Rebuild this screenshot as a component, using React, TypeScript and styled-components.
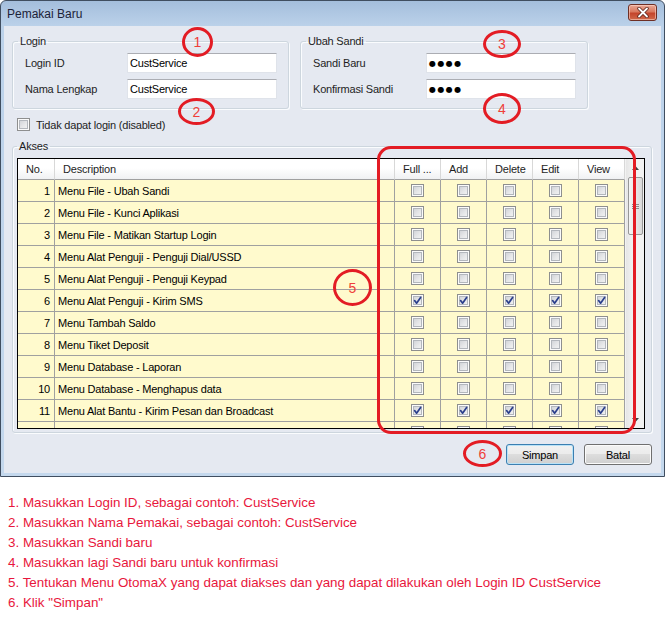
import React from 'react';
import styled, { createGlobalStyle, css } from 'styled-components';

const GlobalStyle = createGlobalStyle`
  html, body { margin: 0; padding: 0; background: #ffffff; }
  body { font-family: "Liberation Sans", Arial, sans-serif; }
  * { box-sizing: border-box; }
`;

const Page = styled.div`
  position: relative;
  width: 666px;
  height: 620px;
  overflow: hidden;
`;

const Window = styled.div`
  width: 665px;
  height: 477px;
  border: 1px solid #404e60;
  border-radius: 6px 6px 0 0;
  background: linear-gradient(#a4bedc, #bcd2ea 26px, #c4d8ed);
  padding: 0 3px 3px 3px;
  display: flex;
  flex-direction: column;
`;

const TitleBar = styled.div`
  height: 25px;
  display: flex;
  align-items: center;
  justify-content: space-between;
  padding: 0 4px 0 3px;
`;

const Title = styled.span`
  font-size: 12px;
  color: #1c2238;
`;

const CloseButton = styled.div`
  width: 29px;
  height: 17px;
  margin-top: -3px;
  border: 1px solid #6e2f25;
  border-radius: 3px;
  background: linear-gradient(#e9a896 0%, #d9795f 45%, #c4452c 55%, #d0694a 100%);
  box-shadow: inset 0 0 0 1px rgba(255, 220, 210, 0.55);
  display: flex;
  align-items: center;
  justify-content: center;
`;

const Body = styled.div`
  flex: 1;
  background: #e5e9f1;
  padding: 8px 9px 8px 8px;
  display: flex;
  flex-direction: column;
  font-size: 11px;
  letter-spacing: -0.2px;
  color: #000;
`;

const TopRow = styled.div`
  display: flex;
  gap: 11px;
`;

const Group = styled.fieldset<{ $w: number; $h: number }>`
  margin: 0;
  width: ${(p) => p.$w}px;
  height: ${(p) => p.$h}px;
  min-width: 0;
  border: 1px solid #cdd6de;
  border-radius: 3px;
  box-shadow: inset 1px 1px 0 #fafcfe, 1px 1px 0 #fafcfe;
  padding: 5px 10px 8px 5px;
`;

const AksesGroup = styled(Group)`
  padding: 5px 6px 3px 4px;
  display: flex;
  flex-direction: column;
`;

const Legend = styled.legend`
  padding: 0 2px;
  font-size: 11px;
  line-height: 14px;
  color: #1e1e1e;
`;

const FormGrid = styled.div<{ $label: number }>`
  display: grid;
  grid-template-columns: ${(p) => p.$label}px 150px;
  grid-auto-rows: 20px;
  row-gap: 6px;
  padding-left: 7px;
  align-items: center;
`;

const FieldLabel = styled.span`
  color: #1e1e1e;
`;

const TextBox = styled.div<{ $secret?: boolean }>`
  height: 20px;
  background: #fff;
  border: 1px solid #dfe3ea;
  border-top-color: #abadb3;
  padding-left: 2px;
  display: flex;
  align-items: center;
  ${(p) =>
    p.$secret &&
    css`
      font-family: "DejaVu Sans", sans-serif;
      font-size: 8px;
      letter-spacing: 1.4px;
      padding-left: 2px;
    `}
`;

const CheckRow = styled.label`
  margin-top: 9px;
  height: 13px;
  display: flex;
  align-items: center;
  gap: 6px;
  padding-left: 5px;
  color: #1e1e1e;
`;

const Box = styled.span`
  width: 13px;
  height: 13px;
  flex: none;
  border: 1px solid #8e8f8f;
  background: linear-gradient(135deg, #c9ccd1 0%, #e6e7e9 55%, #f7f7f7 100%);
  box-shadow: inset 0 0 0 1px #fbfbfb, inset 0 0 0 2px #b3b7bd;
  display: flex;
  align-items: center;
  justify-content: center;
`;

const AksesWrap = styled.div`
  margin-top: 8px;
`;

const Table = styled.div`
  height: 271px;
  border: 1px solid #000;
  display: flex;
  background: #f2f2f2;
`;

const GridArea = styled.div`
  flex: 1;
  overflow: hidden;
  display: grid;
  grid-template-columns: 37px 340px repeat(5, 46px);
  grid-template-rows: 21px;
  grid-auto-rows: 22px;
  align-content: start;
`;

const HeadCell = styled.div`
  border-right: 1px solid #d8d8d8;
  border-bottom: 1px solid #a0a0a0;
  background: linear-gradient(#ffffff 0%, #ffffff 45%, #f0f1f3 100%);
  display: flex;
  align-items: center;
  padding-left: 8px;
  color: #1e1e1e;
  white-space: nowrap;
  overflow: hidden;
`;

const Cell = styled.div<{ $kind: 'num' | 'text' | 'check' }>`
  border-right: 1px solid #a0a0a0;
  border-bottom: 1px solid #a0a0a0;
  background: #fffacd;
  display: flex;
  align-items: center;
  white-space: nowrap;
  overflow: hidden;
  ${(p) =>
    p.$kind === 'num' &&
    css`
      justify-content: flex-end;
      padding-right: 4px;
    `}
  ${(p) =>
    p.$kind === 'text' &&
    css`
      padding-left: 3px;
    `}
  ${(p) =>
    p.$kind === 'check' &&
    css`
      justify-content: center;
    `}
`;

const ScrollBar = styled.div`
  width: 18px;
  flex: none;
  background: linear-gradient(90deg, #e6e6e6, #f2f2f2 40%, #f2f2f2);
  display: flex;
  flex-direction: column;
  align-items: center;
`;

const Arrow = styled.div`
  height: 17px;
  width: 100%;
  display: flex;
  align-items: center;
  justify-content: center;
`;

const Thumb = styled.div`
  margin-top: 1px;
  width: 15px;
  height: 58px;
  border: 1px solid #979797;
  border-radius: 2px;
  background: linear-gradient(90deg, #f4f4f4, #e9e9e9 50%, #d9d9d9);
  display: flex;
  align-items: center;
  justify-content: center;
`;

const Spacer = styled.div`
  flex: 1;
`;

const ButtonRow = styled.div`
  margin-top: 11px;
  display: flex;
  justify-content: flex-end;
  gap: 10px;
`;

const Button = styled.div<{ $default?: boolean }>`
  width: 68px;
  height: 21px;
  border: 1px solid ${(p) => (p.$default ? '#3c7fb1' : '#707070')};
  border-radius: 3px;
  background: linear-gradient(#f2f2f2 0%, #ebebeb 50%, #dddddd 50%, #cfcfcf 100%);
  box-shadow: inset 0 0 0 1px ${(p) => (p.$default ? '#b9e2f7' : '#fbfbfb')};
  display: flex;
  align-items: center;
  justify-content: center;
  color: #000;
`;

const Instructions = styled.ol`
  list-style: none;
  margin: 16px 0 0 0;
  padding: 0 0 0 8px;
  font-size: 13.4px;
  line-height: 20px;
  color: #e8173c;
`;

const Marker = styled.div<{ $x: number; $y: number; $w: number; $h: number; $round?: boolean }>`
  position: absolute;
  left: ${(p) => p.$x}px;
  top: ${(p) => p.$y}px;
  width: ${(p) => p.$w}px;
  height: ${(p) => p.$h}px;
  border: 3px solid #e31c24;
  border-radius: ${(p) => (p.$round ? '50%' : '14px')};
  display: flex;
  align-items: center;
  justify-content: center;
  font-size: 14px;
  color: #ef3f3a;
  pointer-events: none;
`;

const CheckMark = () => (
  <svg width="9" height="9" viewBox="0 0 9 9">
    <path d="M1.6 4.6 L3.6 7.2 L7.6 1.4" fill="none" stroke="#2b3f8c" strokeWidth="1.7" strokeLinecap="round" strokeLinejoin="round" />
  </svg>
);

const CheckBox = ({ checked }: { checked?: boolean }) => <Box>{checked && <CheckMark />}</Box>;

const CloseGlyph = () => (
  <svg width="12" height="11" viewBox="0 0 12 11">
    <path d="M2 1.5 L10 9.5 M10 1.5 L2 9.5" stroke="#5a2118" strokeWidth="3.4" strokeLinecap="round" />
    <path d="M2 1.5 L10 9.5 M10 1.5 L2 9.5" stroke="#ffffff" strokeWidth="1.8" strokeLinecap="round" />
  </svg>
);

const rows = [
  'Menu File - Ubah Sandi',
  'Menu File - Kunci Aplikasi',
  'Menu File - Matikan Startup Login',
  'Menu Alat Penguji - Penguji Dial/USSD',
  'Menu Alat Penguji - Penguji Keypad',
  'Menu Alat Penguji - Kirim SMS',
  'Menu Tambah Saldo',
  'Menu Tiket Deposit',
  'Menu Database - Laporan',
  'Menu Database - Menghapus data',
  'Menu Alat Bantu - Kirim Pesan dan Broadcast',
];
const checkedRows = new Set([6, 11]);
const permCols = ['Full ...', 'Add', 'Delete', 'Edit', 'View'];

const steps = [
  '1. Masukkan Login ID, sebagai contoh: CustService',
  '2. Masukkan Nama Pemakai, sebagai contoh: CustService',
  '3. Masukkan Sandi baru',
  '4. Masukkan lagi Sandi baru untuk konfirmasi',
  '5. Tentukan Menu OtomaX yang dapat diakses dan yang dapat dilakukan oleh Login ID CustService',
  '6. Klik "Simpan"',
];

const markers = [
  { n: '1', x: 182, y: 27, w: 31, h: 30 },
  { n: '2', x: 178, y: 98, w: 37, h: 27 },
  { n: '3', x: 483, y: 30, w: 38, h: 28 },
  { n: '4', x: 483, y: 93, w: 38, h: 31 },
  { n: '5', x: 333, y: 269, w: 39, h: 37 },
  { n: '6', x: 463, y: 440, w: 39, h: 27 },
];

export default function App() {
  return (
    <Page>
      <GlobalStyle />
      <Window>
        <TitleBar>
          <Title>Pemakai Baru</Title>
          <CloseButton>
            <CloseGlyph />
          </CloseButton>
        </TitleBar>
        <Body>
          <TopRow>
            <Group $w={277} $h={75}>
              <Legend>Login</Legend>
              <FormGrid $label={102}>
                <FieldLabel>Login ID</FieldLabel>
                <TextBox>CustService</TextBox>
                <FieldLabel>Nama Lengkap</FieldLabel>
                <TextBox>CustService</TextBox>
              </FormGrid>
            </Group>
            <Group $w={288} $h={75}>
              <Legend>Ubah Sandi</Legend>
              <FormGrid $label={113}>
                <FieldLabel>Sandi Baru</FieldLabel>
                <TextBox $secret>●●●●</TextBox>
                <FieldLabel>Konfirmasi Sandi</FieldLabel>
                <TextBox $secret>●●●●</TextBox>
              </FormGrid>
            </Group>
          </TopRow>
          <CheckRow>
            <CheckBox />
            Tidak dapat login (disabled)
          </CheckRow>
          <AksesWrap>
            <AksesGroup $w={640} $h={294}>
              <Legend>Akses</Legend>
              <Table>
                <GridArea>
                  <HeadCell>No.</HeadCell>
                  <HeadCell>Description</HeadCell>
                  {permCols.map((c) => (
                    <HeadCell key={c}>{c}</HeadCell>
                  ))}
                  {rows.map((r, i) => (
                    <React.Fragment key={r}>
                      <Cell $kind="num">{i + 1}</Cell>
                      <Cell $kind="text">{r}</Cell>
                      {permCols.map((c) => (
                        <Cell $kind="check" key={c}>
                          <CheckBox checked={checkedRows.has(i + 1)} />
                        </Cell>
                      ))}
                    </React.Fragment>
                  ))}
                  <Cell $kind="num" />
                  <Cell $kind="text" />
                  {permCols.map((c) => (
                    <Cell $kind="check" key={c}>
                      <CheckBox />
                    </Cell>
                  ))}
                </GridArea>
                <ScrollBar>
                  <Arrow>
                    <svg width="7" height="4" viewBox="0 0 7 4">
                      <path d="M0 4 L3.5 0 L7 4 Z" fill="#404040" />
                    </svg>
                  </Arrow>
                  <Thumb>
                    <svg width="7" height="7" viewBox="0 0 7 7">
                      <path d="M0 1.5 H7 M0 3.5 H7 M0 5.5 H7" stroke="#8a8a8a" strokeWidth="1" />
                    </svg>
                  </Thumb>
                  <Spacer />
                  <Arrow>
                    <svg width="7" height="4" viewBox="0 0 7 4">
                      <path d="M0 0 L3.5 4 L7 0 Z" fill="#404040" />
                    </svg>
                  </Arrow>
                </ScrollBar>
              </Table>
            </AksesGroup>
          </AksesWrap>
          <ButtonRow>
            <Button $default>Simpan</Button>
            <Button>Batal</Button>
          </ButtonRow>
        </Body>
      </Window>
      <Instructions>
        {steps.map((s) => (
          <li key={s}>{s}</li>
        ))}
      </Instructions>
      <Marker $x={377} $y={146} $w={259} $h={288} />
      {markers.map((m) => (
        <Marker key={m.n} $round $x={m.x} $y={m.y} $w={m.w} $h={m.h}>
          {m.n}
        </Marker>
      ))}
    </Page>
  );
}
